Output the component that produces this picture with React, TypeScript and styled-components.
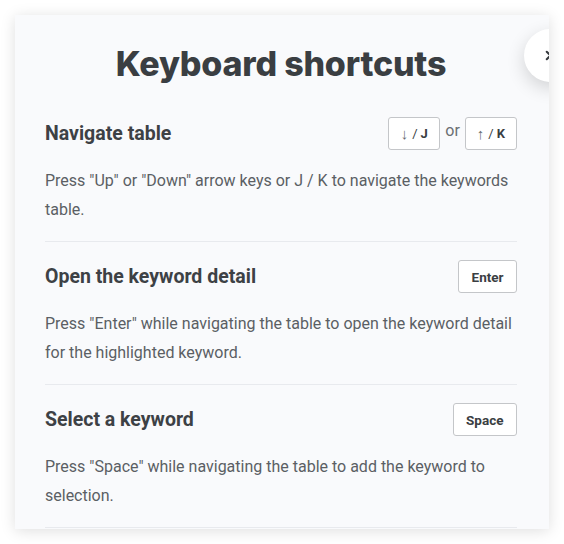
import React from 'react';
import styled, { createGlobalStyle } from 'styled-components';
import { X } from 'lucide-react';

const GlobalStyle = createGlobalStyle`
  body {
    margin: 0;
    background: #ffffff;
    font-family: Roboto, "Liberation Sans", sans-serif;
  }
`;

type Shortcut = {
  title: string;
  keys: string[][];
  text: string;
};

const shortcuts: Shortcut[] = [
  {
    title: 'Navigate table',
    keys: [['↓', 'J'], ['↑', 'K']],
    text: 'Press "Up" or "Down" arrow keys or J / K to navigate the keywords table.',
  },
  {
    title: 'Open the keyword detail',
    keys: [['Enter']],
    text: 'Press "Enter" while navigating the table to open the keyword detail for the highlighted keyword.',
  },
  {
    title: 'Select a keyword',
    keys: [['Space']],
    text: 'Press "Space" while navigating the table to add the keyword to selection.',
  },
];

const App = () => {
  return (
    <>
      <GlobalStyle />
      <Page>
        <Panel>
          <Close aria-label="Close">
            <X size={15} strokeWidth={3.2} />
          </Close>
          <Title>Keyboard shortcuts</Title>
          {shortcuts.map((s) => (
            <Section key={s.title}>
              <Header>
                <Heading>{s.title}</Heading>
                <Keys>
                  {s.keys.map((k, i) => (
                    <React.Fragment key={i}>
                      {i > 0 && <Or>or</Or>}
                      <Key $wide={k.length === 1}>
                        {k.length > 1 ? (
                          <>
                            <Arrow>{k[0]}</Arrow>
                            <Slash>/</Slash>
                            {k[1]}
                          </>
                        ) : (
                          k[0]
                        )}
                      </Key>
                    </React.Fragment>
                  ))}
                </Keys>
              </Header>
              <Text>{s.text}</Text>
            </Section>
          ))}
        </Panel>
      </Page>
    </>
  );
};

export default App;

const Page = styled.div`
  padding: 15px;
`;

const Panel = styled.div`
  position: relative;
  width: 534px;
  height: 514px;
  overflow: hidden;
  box-sizing: border-box;
  padding: 27px 32px 0 30px;
  background: #f9fafc;
  box-shadow: 0 2px 14px rgba(0, 0, 0, 0.13);
`;

const Close = styled.button`
  position: absolute;
  top: 14px;
  left: 509px;
  width: 53px;
  height: 53px;
  border: none;
  border-radius: 50%;
  background: #ffffff;
  color: #33373b;
  display: flex;
  align-items: center;
  justify-content: center;
  padding: 0;
  box-shadow: 0 6px 18px rgba(0, 0, 0, 0.16);
`;

const Title = styled.h1`
  margin: 0 0 31px;
  text-align: center;
  font-family: Inter, "Open Sans", sans-serif;
  font-weight: 800;
  font-size: 34px;
  line-height: 44px;
  letter-spacing: -0.2px;
  color: #3a3e42;
`;

const Section = styled.div`
  padding-bottom: 17px;
  border-bottom: 1px solid #e8eaee;
  & + & {
    padding-top: 18px;
  }
`;

const Header = styled.div`
  display: flex;
  align-items: center;
  justify-content: space-between;
  height: 33px;
`;

const Heading = styled.h2`
  margin: 0;
  font-size: 19.5px;
  font-weight: 700;
  color: #3d4145;
`;

const Keys = styled.div`
  display: flex;
  align-items: center;
  gap: 5px;
`;

const Key = styled.span<{ $wide?: boolean }>`
  display: inline-flex;
  align-items: center;
  justify-content: center;
  box-sizing: border-box;
  height: 33px;
  padding: 0 ${(p) => (p.$wide ? '12.5px' : '11px')};
  min-width: 52px;
  background: #ffffff;
  border: 1px solid #c4c6c9;
  border-radius: 3px;
  font-size: ${(p) => (p.$wide ? '13.5px' : '13px')};
  font-weight: 700;
  color: #3a3e42;
`;

const Arrow = styled.span`
  font-size: 15px;
  font-weight: 400;
  color: #6a6e72;
`;

const Slash = styled.span`
  font-weight: 400;
  margin: 0 3px 0 4px;
`;

const Or = styled.span`
  font-size: 16px;
  color: #6b6f73;
  margin-bottom: 6px;
`;

const Text = styled.p`
  margin: 17px 0 0;
  font-size: 16px;
  line-height: 28.5px;
  color: #5b5f64;
`;
